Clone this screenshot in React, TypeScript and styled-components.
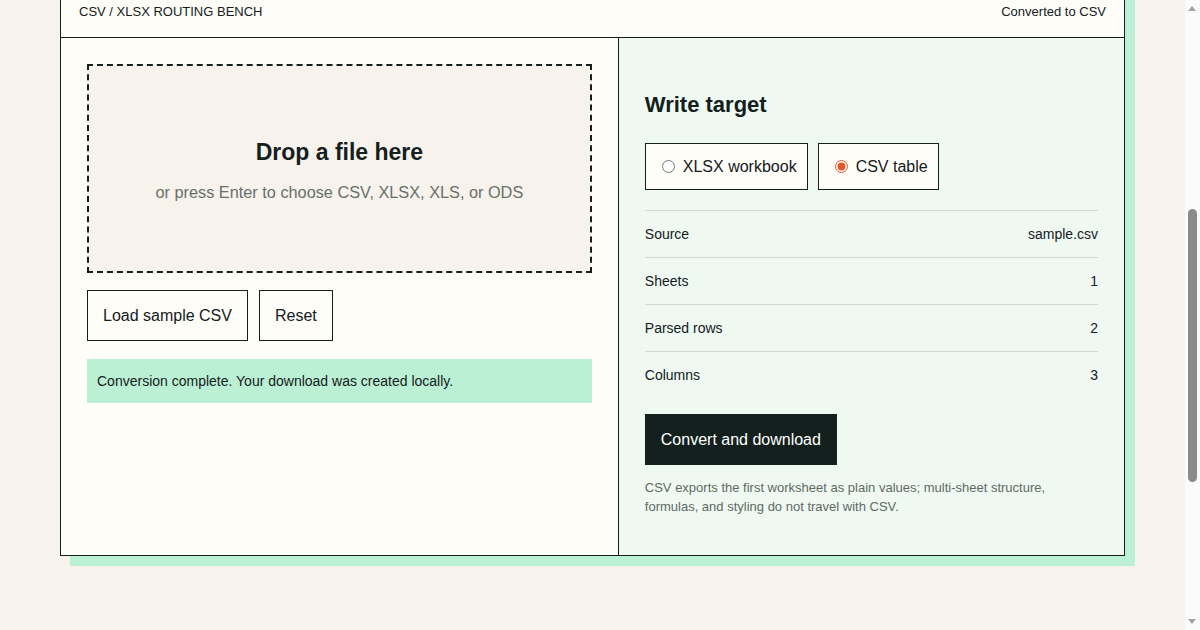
import { useLayoutEffect, useState } from "react";
import styled, { createGlobalStyle } from "styled-components";

const GlobalStyle = createGlobalStyle`
  html {
    background: #f7f3ec;
  }

  body {
    margin: 0;
    background: #f7f3ec;
    color: #13201d;
    font-family: "Liberation Sans", Arial, sans-serif;
  }

  * {
    box-sizing: border-box;
  }
`;

const Page = styled.main`
  padding: 434px 75px 381px 60px;
`;

// the classic window scrollbar from the reference, drawn over the right edge
const ScrollTrack = styled.div`
  position: fixed;
  top: 0;
  right: 0;
  width: 15px;
  height: 100vh;
  background: #fbfbfb;

  &::before,
  &::after {
    content: "";
    position: absolute;
    left: 3px;
    border-left: 4.5px solid transparent;
    border-right: 4.5px solid transparent;
  }

  &::before {
    top: 6px;
    border-bottom: 5px solid #a3a3a3;
  }

  &::after {
    bottom: 6px;
    border-top: 5px solid #a3a3a3;
  }
`;

const ScrollThumb = styled.div`
  position: absolute;
  top: 209px;
  left: 3px;
  width: 9px;
  height: 273px;
  border-radius: 5px;
  background: #8b8b8b;
`;

const Bench = styled.section`
  background: #fffdf8;
  border: 1px solid #13201d;
  box-shadow: 10px 10px 0 #bcf0d4;
`;

const TopBar = styled.header`
  display: flex;
  justify-content: space-between;
  align-items: center;
  padding: 17px 18px;
  border-bottom: 1px solid #13201d;
  font-size: 13px;
  line-height: 16px;

  .label {
    text-transform: uppercase;
  }
`;

const Columns = styled.div`
  display: grid;
  grid-template-columns: 1.1fr 1fr;
`;

const SourcePanel = styled.div`
  display: flex;
  flex-direction: column;
  gap: 17px;
  padding: 26px;
`;

const DropZone = styled.div`
  display: flex;
  flex-direction: column;
  align-items: center;
  justify-content: center;
  gap: 17px;
  min-height: 209px;
  padding-top: 4px;
  border: 2px dashed #13201d;
  background: #f7f2ec;
  cursor: pointer;

  h2 {
    margin: 0;
    font-size: 23px;
    font-weight: 700;
  }

  p {
    margin: 0;
    font-size: 16.3px;
    color: #66716b;
  }
`;

const ButtonRow = styled.div`
  display: flex;
  gap: 11px;
`;

const Button = styled.button<{ $primary?: boolean }>`
  align-self: flex-start;
  padding: 15px 15px;
  border: 1px solid #13201d;
  background: ${(p) => (p.$primary ? "#13201d" : "#fffdf8")};
  color: ${(p) => (p.$primary ? "#ffffff" : "#13201d")};
  font-family: inherit;
  font-size: 16px;
  line-height: 19px;
  cursor: pointer;
`;

const Status = styled.div`
  margin-top: 1px;
  padding: 12px 10px;
  background: #bcf0d4;
  font-size: 14px;
  line-height: 20px;
`;

const TargetPanel = styled.div`
  display: flex;
  flex-direction: column;
  padding: 54px 26px 39px;
  border-left: 1px solid #13201d;
  background: #eff9f2;

  h2 {
    margin: 0 0 26px;
    font-size: 22px;
    line-height: 25px;
    font-weight: 700;
  }
`;

const Options = styled.div`
  display: flex;
  gap: 10px;
  margin-bottom: 20px;
`;

const Option = styled.label`
  display: inline-flex;
  align-items: center;
  gap: 8px;
  padding: 13px 10px 13px 16px;
  border: 1px solid #13201d;
  background: #fffdf8;
  font-size: 16px;
  line-height: 19px;
  cursor: pointer;

  input {
    width: 13px;
    height: 13px;
    margin: 0;
    accent-color: #e8572a;
  }
`;

const Stats = styled.dl`
  margin: 0 0 16px;
`;

const StatRow = styled.div`
  display: flex;
  justify-content: space-between;
  padding: 14px 0;
  border-top: 1px solid #cfd8d2;
  font-size: 14px;
  line-height: 18px;

  dt,
  dd {
    margin: 0;
  }
`;

const Note = styled.p`
  margin: 13px 0 0;
  font-size: 13px;
  line-height: 19px;
  color: #5f6a64;
`;

const stats = [
  ["Source", "sample.csv"],
  ["Sheets", "1"],
  ["Parsed rows", "2"],
  ["Columns", "3"],
];

export default function App() {
  const [target, setTarget] = useState("csv");

  useLayoutEffect(() => {
    window.scrollTo(0, 448);
  }, []);

  return (
    <>
      <GlobalStyle />
      <Page>
        <Bench>
          <TopBar>
            <span className="label">CSV / XLSX routing bench</span>
            <span>Converted to CSV</span>
          </TopBar>
          <Columns>
            <SourcePanel>
              <DropZone role="button" tabIndex={0}>
                <h2>Drop a file here</h2>
                <p>or press Enter to choose CSV, XLSX, XLS, or ODS</p>
              </DropZone>
              <ButtonRow>
                <Button type="button">Load sample CSV</Button>
                <Button type="button">Reset</Button>
              </ButtonRow>
              <Status>Conversion complete. Your download was created locally.</Status>
            </SourcePanel>
            <TargetPanel>
              <h2>Write target</h2>
              <Options>
                <Option>
                  <input
                    type="radio"
                    name="target"
                    checked={target === "xlsx"}
                    onChange={() => setTarget("xlsx")}
                  />
                  XLSX workbook
                </Option>
                <Option>
                  <input
                    type="radio"
                    name="target"
                    checked={target === "csv"}
                    onChange={() => setTarget("csv")}
                  />
                  CSV table
                </Option>
              </Options>
              <Stats>
                {stats.map(([k, v]) => (
                  <StatRow key={k}>
                    <dt>{k}</dt>
                    <dd>{v}</dd>
                  </StatRow>
                ))}
              </Stats>
              <Button type="button" $primary>
                Convert and download
              </Button>
              <Note>
                CSV exports the first worksheet as plain values; multi-sheet structure,
                formulas, and styling do not travel with CSV.
              </Note>
            </TargetPanel>
          </Columns>
        </Bench>
      </Page>
      <ScrollTrack aria-hidden="true">
        <ScrollThumb />
      </ScrollTrack>
    </>
  );
}
